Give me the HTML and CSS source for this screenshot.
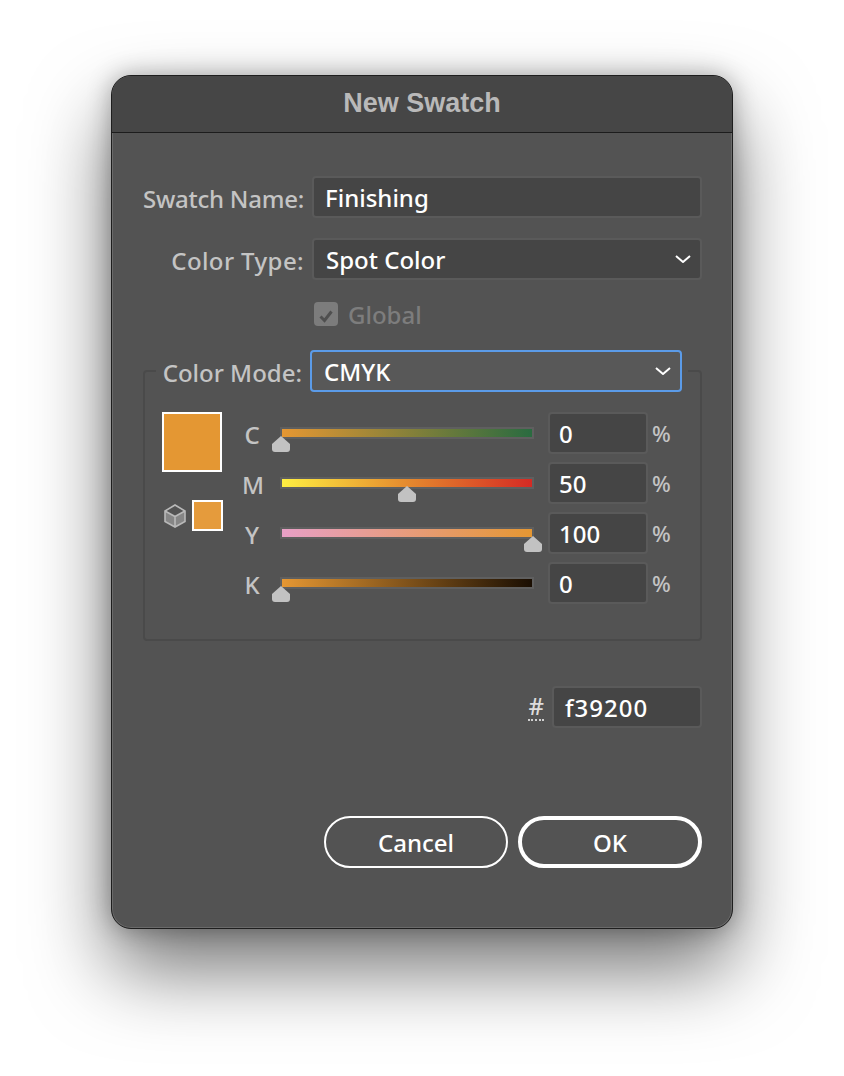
FILE: index.html
```html
<!DOCTYPE html>
<html lang="en">
  <head>
    <title>New Swatch</title>
    <meta charset="utf-8" />
    <link rel="stylesheet" href="styles.css">
  </head>
  <body>
    <div class="dialog">
      <div class="title">New Swatch</div>

      <div class="content">
        <div class="form-row">
          <span class="label tight">Swatch Name:</span>
          <div class="field">Finishing</div>
        </div>
        <div class="form-row">
          <span class="label loose">Color Type:</span>
          <div class="field select">
            Spot Color
            <svg class="chevron" width="16" height="8" viewBox="0 0 16 8"><path d="M1 1l7 6 7-6" /></svg>
          </div>
        </div>
        <div class="global">
          <span class="checkbox">
            <svg width="24" height="24" viewBox="0 0 24 24"><path d="M6.5 12.5l4 4 7-9" /></svg>
          </span>
          <span>Global</span>
        </div>

        <div class="group">
          <div class="group-head">
            <span class="label">Color Mode:</span>
            <div class="field select focused">
              CMYK
              <svg class="chevron" width="16" height="8" viewBox="0 0 16 8"><path d="M1 1l7 6 7-6" /></svg>
            </div>
          </div>

          <div class="mixer">
            <div class="swatches">
              <div class="swatch-big"></div>
              <div class="swatch-line">
                <svg class="cube" width="24" height="26" viewBox="0 0 24 26">
                  <path class="face" d="M2 8l10 5.5V24L2 18.5zM22 8l-10 5.5V24l10-5.5z" />
                  <path class="edge" d="M12 2l10 6v10.5L12 24 2 18.5V8zM2 8l10 5.5L22 8M12 13.5V24" />
                </svg>
                <div class="swatch-small"></div>
              </div>
            </div>

            <div class="sliders">
              <div class="slider-row">
                <span class="channel">C</span>
                <div class="track"><div class="ramp ramp-c"></div><span class="thumb" style="--v: 0"></span></div>
                <div class="field number">0</div>
                <span class="percent">%</span>
              </div>
              <div class="slider-row">
                <span class="channel">M</span>
                <div class="track"><div class="ramp ramp-m"></div><span class="thumb" style="--v: 50"></span></div>
                <div class="field number">50</div>
                <span class="percent">%</span>
              </div>
              <div class="slider-row">
                <span class="channel">Y</span>
                <div class="track"><div class="ramp ramp-y"></div><span class="thumb" style="--v: 100"></span></div>
                <div class="field number">100</div>
                <span class="percent">%</span>
              </div>
              <div class="slider-row">
                <span class="channel">K</span>
                <div class="track"><div class="ramp ramp-k"></div><span class="thumb" style="--v: 0"></span></div>
                <div class="field number">0</div>
                <span class="percent">%</span>
              </div>
            </div>
          </div>
        </div>

        <div class="hex-row">
          <span class="hash">#</span>
          <div class="field hex">f39200</div>
        </div>

        <div class="buttons">
          <div class="btn">Cancel</div>
          <div class="btn primary">OK</div>
        </div>
      </div>
    </div>
  </body>
</html>
```

FILE: styles.css
```css
body {
  margin: 0;
  padding-top: 75px;
  height: 1001px;
  overflow: hidden;
  background-color: #fff;
  font-family: "Noto Sans", sans-serif;
  font-size: 24px;
  font-weight: 500;
  color: #fff;
}

.dialog {
  width: 622px;
  height: 854px;
  box-sizing: border-box;
  margin: 0 auto;
  border: 1px solid #1e1e1e;
  border-radius: 20px;
  background-color: #535353;
  box-shadow: inset 0 0 0 1px #6a6a6a, 0 40px 80px rgba(0, 0, 0, 0.55),
    0 0 24px rgba(0, 0, 0, 0.3);
  overflow: hidden;
}

.title {
  height: 56px;
  box-sizing: content-box;
  border-bottom: 1px solid #1c1c1c;
  background-color: #464646;
  color: #b9b9b9;
  font-family: "Liberation Sans", sans-serif;
  font-size: 27px;
  font-weight: bold;
  line-height: 54px;
  text-align: center;
}

.content {
  padding: 43px 30px 0 31px;
}

.form-row {
  display: grid;
  grid-template-columns: 161px 1fr;
  column-gap: 8px;
  align-items: center;
  margin-bottom: 20px;
}

.label {
  padding-top: 2px;
  color: #c4c4c4;
  text-align: right;
  white-space: nowrap;
}

.loose {
  letter-spacing: 0.4px;
}

.tight {
  letter-spacing: -0.25px;
}

.field {
  height: 42px;
  box-sizing: border-box;
  border: 2px solid #5a5a5a;
  border-radius: 4px;
  padding-left: 11px;
  background-color: #454545;
  line-height: 40px;
}

.select {
  position: relative;
  padding-left: 12px;
}

.chevron {
  position: absolute;
  right: 9px;
  top: 15px;
}

.chevron path {
  fill: none;
  stroke: #fff;
  stroke-width: 2;
}

.global {
  display: flex;
  align-items: center;
  gap: 10px;
  height: 24px;
  margin: 22px 0 0 171px;
  color: #7d7d7d;
}

.checkbox {
  width: 24px;
  height: 24px;
  border-radius: 4px;
  background-color: #7c7c7c;
}

.checkbox path {
  fill: none;
  stroke: #4f4f4f;
  stroke-width: 3;
}

.group {
  height: 271px;
  box-sizing: border-box;
  margin-top: 44px;
  border: 2px solid #4a4a4a;
  border-radius: 4px;
}

.group-head {
  display: flex;
  align-items: center;
  gap: 8px;
  margin: -22px 12px 0 11px;
  padding: 0 6px;
  background-color: #535353;
}

.group-head .label {
  width: 140px;
}

.group-head .field {
  flex: 1;
}

.focused {
  border-color: #5b9be8;
  background-color: #585858;
}

.mixer {
  display: flex;
  gap: 20px;
  margin: 20px 0 0 17px;
}

.swatches {
  width: 60px;
}

.swatch-big {
  width: 60px;
  height: 60px;
  box-sizing: border-box;
  border: 2px solid #fff;
  background-color: #e49733;
}

.swatch-line {
  display: flex;
  align-items: center;
  gap: 5px;
  margin-top: 28px;
  margin-left: 1px;
}

.cube {
  flex-shrink: 0;
}

.cube .face {
  fill: #868686;
}

.cube .edge {
  fill: none;
  stroke: #b9b9b9;
  stroke-width: 1.6;
}

.swatch-small {
  width: 31px;
  height: 31px;
  flex-shrink: 0;
  box-sizing: border-box;
  border: 2px solid #fff;
  background-color: #e59b3c;
}

.sliders {
  display: flex;
  flex-direction: column;
  gap: 8px;
}

.slider-row {
  display: flex;
  align-items: center;
  height: 42px;
}

.channel {
  width: 20px;
  margin-top: 2px;
  color: #c4c4c4;
  text-align: center;
}

.track {
  position: relative;
  width: 254px;
  height: 12px;
  box-sizing: border-box;
  margin: 0 14px 0 18px;
  border: 2px solid #5f5f5f;
}

.ramp {
  height: 100%;
}

.ramp-c {
  background: linear-gradient(to right, #e59733, #2a6b40);
}

.ramp-m {
  background: linear-gradient(to right, #feee42, #e58a2e 50%, #d42a24);
}

.ramp-y {
  background: linear-gradient(to right, #e8a0c6, #e59733);
}

.ramp-k {
  background: linear-gradient(to right, #e59733, #1a0e02);
}

.thumb {
  position: absolute;
  top: 7px;
  left: calc(var(--v) * 2.52px - 10px);
  width: 18px;
  height: 16px;
  border-radius: 0 0 3px 3px;
  background-color: #c2c2c2;
  clip-path: polygon(50% 0, 100% 50%, 100% 100%, 0 100%, 0 50%);
}

.number {
  width: 100px;
  padding-left: 9px;
}

.percent {
  margin-left: 4px;
  color: #c4c4c4;
  font-size: 22px;
}

.hex-row {
  display: flex;
  justify-content: flex-end;
  align-items: center;
  gap: 8px;
  margin-top: 45px;
}

.hash {
  border-bottom: 2px dotted #d0d0d0;
  line-height: 26px;
  color: #dcdcdc;
}

.hex {
  width: 150px;
  letter-spacing: 1px;
}

.buttons {
  display: flex;
  justify-content: flex-end;
  gap: 10px;
  margin-top: 88px;
}

.btn {
  width: 184px;
  height: 52px;
  box-sizing: border-box;
  border: 2px solid #fff;
  border-radius: 26px;
  line-height: 50px;
  text-align: center;
}

.primary {
  border-width: 4px;
  line-height: 46px;
}
```
